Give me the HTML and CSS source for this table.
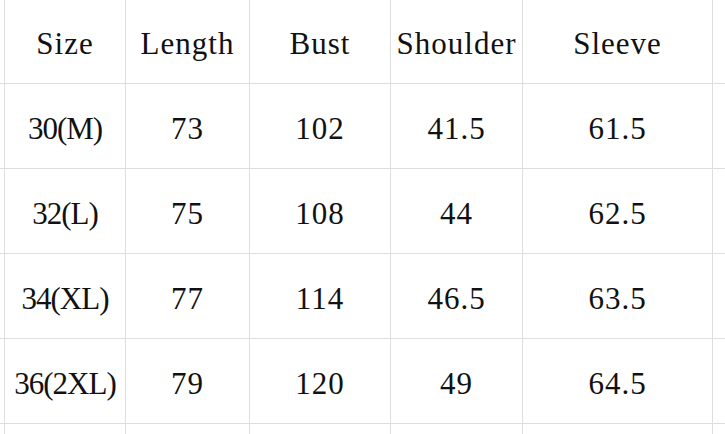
FILE: index.html
```html
<!DOCTYPE html>
<html>
<head>
<meta charset="utf-8">
<link rel="stylesheet" href="styles.css">
</head>
<body>
<div class="sheet">
  <div class="cell edge"></div><div class="cell head">Size</div><div class="cell head">Length</div><div class="cell head">Bust</div><div class="cell head">Shoulder</div><div class="cell head">Sleeve</div><div class="cell edge"></div>

  <div class="cell edge"></div><div class="cell size">30(M)</div><div class="cell">73</div><div class="cell">102</div><div class="cell">41.5</div><div class="cell">61.5</div><div class="cell edge"></div>

  <div class="cell edge"></div><div class="cell size">32(L)</div><div class="cell">75</div><div class="cell">108</div><div class="cell">44</div><div class="cell">62.5</div><div class="cell edge"></div>

  <div class="cell edge"></div><div class="cell size">34(XL)</div><div class="cell">77</div><div class="cell">114</div><div class="cell">46.5</div><div class="cell">63.5</div><div class="cell edge"></div>

  <div class="cell edge"></div><div class="cell size">36(2XL)</div><div class="cell">79</div><div class="cell">120</div><div class="cell">49</div><div class="cell">64.5</div><div class="cell edge"></div>

  <div class="cell edge"></div><div class="cell"></div><div class="cell"></div><div class="cell"></div><div class="cell"></div><div class="cell"></div><div class="cell edge"></div>
</div>
</body>
</html>
```

FILE: styles.css
```css
html, body {
  margin: 0;
  padding: 0;
  background: #ffffff;
}
body {
  width: 725px;
  height: 434px;
  overflow: hidden;
}
.sheet {
  display: grid;
  grid-template-columns: 5px 121px 124px 141px 132px 190px 20px;
  grid-template-rows: 84px 85px 85px 85px 85px 20px;
  font-family: "Liberation Serif", "Times New Roman", serif;
  font-size: 31px;
  color: #111111;
}
.cell {
  box-sizing: border-box;
  border-right: 1px solid #dedede;
  border-bottom: 1px solid #dedede;
  display: flex;
  align-items: center;
  justify-content: center;
  line-height: 1;
  padding-top: 4px;
  letter-spacing: 1px;
  white-space: nowrap;
}
.head {
  padding-top: 3px;
}
.size {
  letter-spacing: -1px;
}
```
